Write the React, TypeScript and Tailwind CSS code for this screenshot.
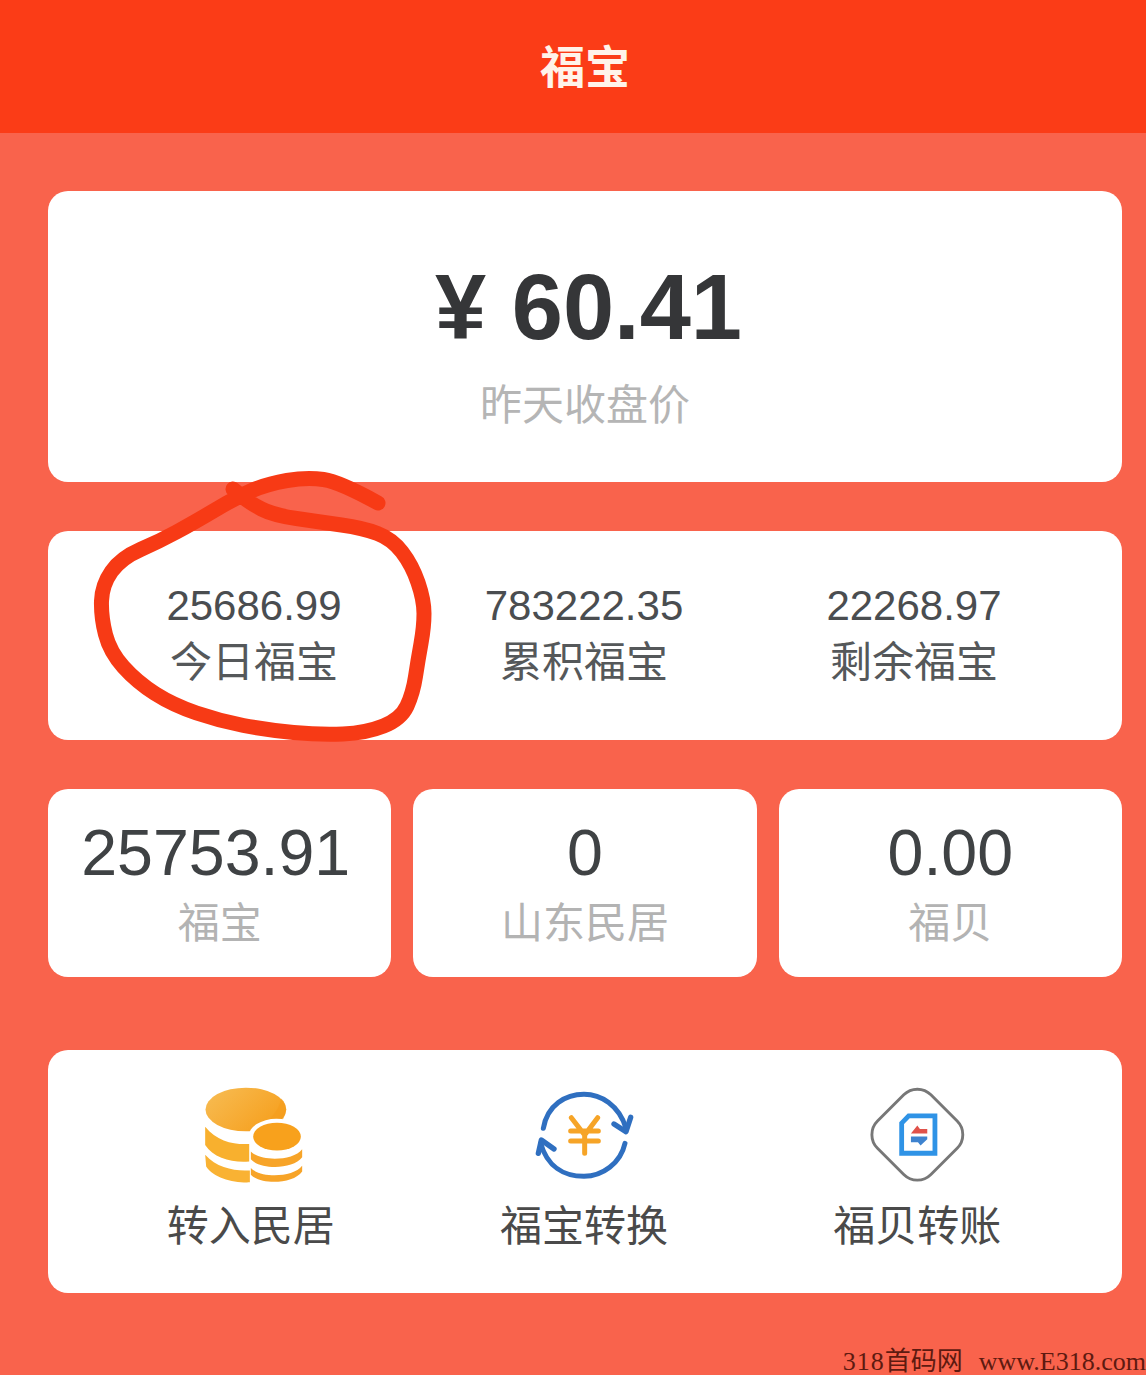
const SANS = "font-['Liberation_Sans','Noto_Sans_CJK_SC',sans-serif]";

// hand-drawn circle round the first stat, in page coordinates
const scribble: [number, number][] = [
  [378, 503], [340, 482], [307, 477], [267, 484], [237, 497], [193, 523], [160, 541], [121, 558],
  [102, 585], [101, 617], [110, 652], [137, 682], [173, 705], [220, 721], [267, 730], [320, 735],
  [366, 733], [401, 719], [413, 693], [418, 660], [424, 627], [424, 600], [412, 565], [392, 539],
  [363, 528], [320, 522], [273, 515], [250, 503], [233, 489],
];

const smoothPath = (pts: [number, number][]) => {
  let d = `M${pts[0][0]} ${pts[0][1]}`;
  for (let i = 1; i < pts.length - 1; i++) {
    const mx = (pts[i][0] + pts[i + 1][0]) / 2;
    const my = (pts[i][1] + pts[i + 1][1]) / 2;
    d += ` Q${pts[i][0]} ${pts[i][1]} ${mx} ${my}`;
  }
  const last = pts[pts.length - 1];
  return `${d} L${last[0]} ${last[1]}`;
};

function CoinsIcon() {
  return (
    <svg viewBox="165 50 295 290" className="ml-[6px] h-[96px] w-[98px]">
      <defs>
        <linearGradient id="coinTop" x1="0" y1="0" x2="1" y2="0.6">
          <stop offset="0" stopColor="#f7bd55" />
          <stop offset="1" stopColor="#f6a01f" />
        </linearGradient>
      </defs>
      <path d="M165 255 C200 295 255 305 300 302 L300 338 C250 340 190 325 168 290 Z" fill="#f9b233" />
      <path d="M165 170 C200 215 255 225 298 222 L298 275 C250 280 190 265 165 225 Z" fill="#f8b02e" />
      <ellipse cx="288" cy="118" rx="122" ry="66" fill="url(#coinTop)" />
      <path d="M395 158 Q408 135 408 118 Q410 100 395 85 Q385 130 340 165 Z" fill="#f59d1c" opacity="0.6" />
      <ellipse cx="380" cy="200" rx="84" ry="54" fill="#fff" />
      <path d="M303 245 C330 275 430 275 458 238 L458 262 C430 300 330 300 303 268 Z" fill="#f7a428" />
      <path d="M303 295 C330 325 430 325 458 288 L458 305 C430 345 330 345 303 315 Z" fill="#f7a428" />
      <ellipse cx="382" cy="200" rx="72" ry="42" fill="#f8a11c" />
    </svg>
  );
}

function ExchangeIcon() {
  return (
    <svg viewBox="105 55 300 270" fill="none" className="h-[90px] w-[100px]">
      <path d="M133 170 C145 100 200 68 255 68 C305 68 360 100 381 170" stroke="#2f6fc0" strokeWidth="15" strokeLinecap="round" />
      <path d="M345 157 L381 180 L395 137" stroke="#2f6fc0" strokeWidth="16" strokeLinecap="round" strokeLinejoin="round" />
      <path d="M378 215 C365 275 310 314 255 314 C195 314 145 285 125 215" stroke="#2f6fc0" strokeWidth="15" strokeLinecap="round" />
      <path d="M165 232 L127 205 L118 245" stroke="#2f6fc0" strokeWidth="16" strokeLinecap="round" strokeLinejoin="round" />
      <path
        d="M217 138 L257 190 L296 138 M215 178 H298 M215 208 H298 M257 190 V245"
        stroke="#f6a427"
        strokeWidth="15"
        strokeLinecap="round"
        strokeLinejoin="round"
      />
    </svg>
  );
}

function TransferIcon() {
  return (
    <svg viewBox="85 45 295 300" fill="none" className="h-[96px] w-[95px]">
      <rect x="114" y="76" width="236" height="236" rx="60" transform="rotate(45 232 194)" stroke="#777" strokeWidth="9" fill="#fff" />
      <path d="M205 135 H287 V252 H183 V158 Z" stroke="#2f93e6" strokeWidth="15" strokeLinejoin="miter" fill="#fff" />
      <path d="M212 190 L232 165 L240 176 H263 V190 Z" fill="#e0524a" />
      <path d="M212 200 H263 V208 L242 228 L234 218 H212 Z" fill="#3e83cf" />
    </svg>
  );
}

function Stat({ value, label }: { value: string; label: string }) {
  return (
    <div className="flex flex-col items-center">
      <div className="text-[42px] leading-[50px] text-[#4a4d50]">{value}</div>
      <div className="mt-[7px] text-[42px] leading-[50px] text-[#55585a]">{label}</div>
    </div>
  );
}

function Balance({ value, label, nudge }: { value: string; label: string; nudge?: boolean }) {
  return (
    <div className="flex h-[188px] flex-col items-center rounded-[20px] bg-white pt-[29px]">
      <div className={nudge ? "mr-[8px] text-[64.5px] leading-[70px] text-[#3f4244]" : "text-[64.5px] leading-[70px] text-[#3f4244]"}>
        {value}
      </div>
      <div className="mt-[11px] text-[42px] leading-[50px] text-[#b3b3b3]">{label}</div>
    </div>
  );
}

export default function App() {
  return (
    <div className={`relative h-[1375px] w-[1146px] overflow-hidden bg-[#f9634c] ${SANS}`}>
      <div className="flex h-[133px] items-center justify-center bg-[#fb3c17] pl-6 pt-[4px] text-[45px] font-bold text-[#fff3ea]">
        福宝
      </div>

      <div className="flex flex-col pl-12 pr-6 pt-[58px]">
        {/* Closing price */}
        <div className="flex h-[291px] flex-col items-center rounded-[20px] bg-white pt-[71px]">
          <div className="ml-[7px] text-[92px] font-bold leading-[90px] text-[#353638]">¥ 60.41</div>
          <div className="mt-[29px] text-[42px] leading-[50px] text-[#b5b5b5]">昨天收盘价</div>
        </div>

        {/* Stats */}
        <div className="mt-[49px] grid h-[209px] grid-cols-3 rounded-[20px] bg-white pl-[41px] pr-[43px] pt-[50px]">
          <Stat value="25686.99" label="今日福宝" />
          <Stat value="783222.35" label="累积福宝" />
          <Stat value="22268.97" label="剩余福宝" />
        </div>

        {/* Balances */}
        <div className="mt-[49px] grid grid-cols-3 gap-[22px]">
          <Balance value="25753.91" label="福宝" nudge />
          <Balance value="0" label="山东民居" />
          <Balance value="0.00" label="福贝" />
        </div>

        {/* Actions */}
        <div className="mt-[73px] grid h-[243px] grid-cols-3 rounded-[20px] bg-white pl-[36px] pr-[38px] pt-[37px]">
          <div className="flex flex-col items-center">
            <div className="flex h-[96px] items-center">
              <CoinsIcon />
            </div>
            <div className="mt-[19px] text-[42px] leading-[50px] text-[#4a4a4a]">转入民居</div>
          </div>
          <div className="flex flex-col items-center">
            <div className="flex h-[96px] items-center">
              <ExchangeIcon />
            </div>
            <div className="mt-[19px] text-[42px] leading-[50px] text-[#4a4a4a]">福宝转换</div>
          </div>
          <div className="flex flex-col items-center">
            <div className="flex h-[96px] items-center">
              <TransferIcon />
            </div>
            <div className="mt-[19px] text-[42px] leading-[50px] text-[#4a4a4a]">福贝转账</div>
          </div>
        </div>
      </div>

      {/* Red pen mark over the first stat */}
      <svg viewBox="85 465 350 285" fill="none" className="absolute left-[85px] top-[465px] h-[285px] w-[350px]">
        <path d={smoothPath(scribble)} stroke="#f73a15" strokeWidth="15" strokeLinecap="round" strokeLinejoin="round" />
      </svg>

      {/* Site watermark */}
      <div className="absolute bottom-[-1px] right-0 whitespace-nowrap font-['Liberation_Serif','Noto_Sans_CJK_SC',serif] text-[26px] leading-[28px] text-[#5e1a10]">
        <span className="tracking-[1px]">318</span>
        <span>首码网</span>
        <span className="ml-[16px]">www.E318.com</span>
      </div>
    </div>
  );
}
